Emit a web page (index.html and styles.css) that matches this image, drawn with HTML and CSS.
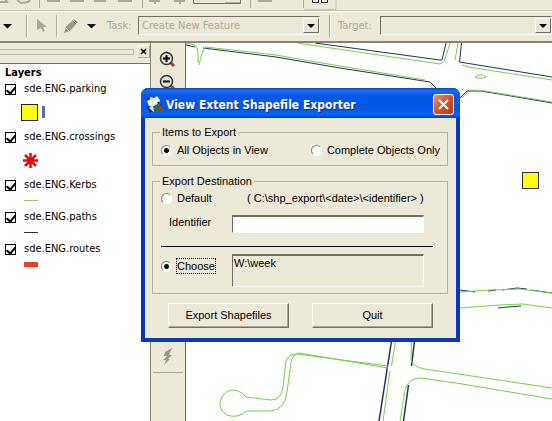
FILE: index.html
```html
<!DOCTYPE html>
<html lang="en">
<head>
<meta charset="utf-8">
<title>View Extent Shapefile Exporter</title>
<link rel="stylesheet" href="styles.css">
</head>
<body>
<header class="toolbars">
  <div class="bar-standard">
    <svg class="bar-icons" width="552" height="10" aria-hidden="true">
      <g fill="none" stroke="#aca899">
        <path d="M0 2h7l-2-3M17 0l4 3 7-1 2-2M47 1h13M70 1h14M94 1h12M118 1h14M149 1h11M155 0v4M174 1h11M180 0v4M258 1h14" stroke-width="2"/>
        <path d="M39.500 0v8M142.500 0v8M250.500 0v8M303.500 0v8"/>
      </g>
      <path d="M193.500 0v3.500H240.500V0" fill="none" stroke="#716f64"/>
      <path d="M225 3h15" stroke="#716f64"/>
      <path d="M312.500 0v2.500h6V0M321.500 0v2.500h6V0" fill="none" stroke="#222"/>
      <path d="M304 9.500h32V0" fill="none" stroke="#c5c2b2"/>
    </svg>
  </div>
  <div class="bar-editor">
    <button class="tool editor-menu" aria-label="Editor menu"><svg width="10" height="6"><path d="M0 1h9L4.500 5.500z" fill="#000"/></svg></button>
    <span class="rule"></span>
    <button class="tool pointer" aria-label="Edit tool"><svg width="12" height="14"><path d="M1 0l10 8H7l2 4-2 1-2-4-4 2z" fill="#aca899"/></svg></button>
    <span class="rule"></span>
    <button class="tool pencil" aria-label="Sketch tool"><svg width="16" height="16"><path d="M0 15l2-6L10 1l4 3-8 9z" fill="#9a9788"/><path d="M2 10l3 3M9 2l4 4" stroke="#ece9d8"/></svg></button>
    <button class="tool" aria-label="Sketch tools"><svg width="10" height="6"><path d="M0 1h9L4.500 5.500z" fill="#000"/></svg></button>
    <label class="task-label" for="task">Task:</label>
    <span class="combo task">
      <select id="task" disabled><option>Create New Feature</option></select>
      <svg class="arrow" width="16" height="15" aria-hidden="true"><path d="M3 5h8l-4 4z" fill="#000"/></svg>
    </span>
    <span class="rule"></span>
    <label class="target-label" for="target">Target:</label>
    <span class="combo target">
      <select id="target" disabled><option></option></select>
      <svg class="arrow" width="16" height="15" aria-hidden="true"><path d="M3 5h8l-4 4z" fill="#000"/></svg>
    </span>
  </div>
</header>
<main class="workspace">
  <aside class="contents">
    <div class="grip-row"><span class="grip"></span><button class="panel-close" aria-label="Close panel"><svg width="7" height="7"><path d="M1 1l5 5M6 1L1 6" stroke="#000" stroke-width="1.500"/></svg></button></div>
    <div class="layers">
      <h2>Layers</h2>
      <label class="layer"><input type="checkbox" checked>sde.ENG.parking</label>
      <div class="symbol tall"><svg width="30" height="20"><rect x=".5" y="1.500" width="16" height="16" fill="#ff0" stroke="#222"/><path d="M22.500 3v12" stroke="#5b6f99" stroke-width="3"/></svg></div>
      <label class="layer"><input type="checkbox" checked>sde.ENG.crossings</label>
      <div class="symbol tall"><svg width="20" height="20"><path d="M9.500 2v15M2 9.500h15M4 4l11 11M15 4L4 15" stroke="#e30b0b" stroke-width="2.500"/></svg></div>
      <label class="layer"><input type="checkbox" checked>sde.ENG.Kerbs</label>
      <div class="symbol"><svg width="20" height="10"><path d="M3 4.500h14" stroke="#8fd05f"/></svg></div>
      <label class="layer"><input type="checkbox" checked>sde.ENG.paths</label>
      <div class="symbol"><svg width="20" height="10"><path d="M3 4.500h14" stroke="#26324a"/></svg></div>
      <label class="layer"><input type="checkbox" checked>sde.ENG.routes</label>
      <div class="symbol"><svg width="20" height="10"><path d="M3 4.500h14" stroke="#e0402c" stroke-width="5"/></svg></div>
    </div>
  </aside>
  <nav class="tools">
    <button class="tool" aria-label="Zoom in"><svg width="18" height="18"><path d="M11 11l4 4" stroke="#b03a30" stroke-width="3"/><circle cx="7.500" cy="7.500" r="6" fill="#e4e4dc" stroke="#333" stroke-width="1.500"/><path d="M7.500 4v7M4 7.500h7" stroke="#000" stroke-width="2"/></svg></button>
    <button class="tool" aria-label="Zoom out"><svg width="18" height="18"><path d="M11 11l4 4" stroke="#b03a30" stroke-width="3"/><circle cx="7.500" cy="7.500" r="6" fill="#e4e4dc" stroke="#333" stroke-width="1.500"/><path d="M4 7.500h7" stroke="#000" stroke-width="2"/></svg></button>
    <button class="tool flash" aria-label="Hyperlink"><svg width="12" height="18"><path d="M10 0L3 4l-1 4h3l-4 4h3l-2 5 6-6H6l4-4H7z" fill="#9a9788"/></svg></button>
  </nav>
  <section class="map" aria-label="Map">
    <svg width="100%" height="100%">
      <g transform="translate(-186 -43)" fill="none">
        <g stroke="#23305c">
          <path d="M186 45l9 2M203 48L276 57 340 68 430 82 436 88M315 43L440 60 442 60 446 43M461.500 43L459.500 62 552 77M460 98l7-7h14l30 5 41 7"/>
          <path d="M460 290l15 2M488 291l8-1M502 290l15-2 10 1M531 290l21 3M498 308l10-1 13-1"/>
          <path d="M391.500 341L379 421M414.500 341L411.500 366M408.500 385L403.500 421" stroke-width="1.500"/>
        </g>
        <g stroke="#72cf4c">
          <path d="M186 43l9 2q4 3 3 18M206 47L276 55 310 61 425 80M206 47q-4 3-7 18M297 43L440 64q5-2 5-5l5-16M462 65l6 2 84 13M458 43l-3 17M462 98l8-8 15 1 67 11"/>
          <path d="M475 77l3-2h5l3 2-3 1h-5zM460 292l30-2 30-1 32 4M460 308l40-3 23-1 29 4"/>
          <path d="M395.500 341L391.500 366M390 371L383 421M411.500 341l-.5 19q2 7 14 9L552 388M400 421l5-31q3-12 16-12l35 5 96 16"/>
          <path d="M388 366L297 354q-9 0-11 7l-3 26q-2 13-12 13l-25-3-4-4q-11-7-19 2-8 13 4 20 10 4 20-4l23 0q15-1 17-19l4-30q2-8 8-9L388 368"/>
        </g>
        <rect x="522.500" y="172.500" width="16" height="16" fill="#ff0" stroke="#333"/>
      </g>
    </svg>
  </section>
</main>
<form class="dialog" role="dialog" aria-labelledby="dialog-title">
  <div class="titlebar">
    <svg width="18" height="18" aria-hidden="true"><path d="M1 5l3-4 4 1 3-2 3 4-2 6H3z" fill="#e9f1e7"/><path d="M1 4l3-2M2 11l3 5M12 6l4 7" stroke="#222" stroke-width="2"/><path d="M9 9l5-2 1 9H7z" fill="#356b4c"/><path d="M3 12l4-3 1 7" fill="#d5ebff"/><path d="M14 10l3 5" stroke="#c33" stroke-width="2"/></svg>
    <h1 id="dialog-title">View Extent Shapefile Exporter</h1>
    <button type="button" class="close" aria-label="Close"><svg width="13" height="13"><path d="M2 2l9 9M11 2l-9 9" stroke="#fff" stroke-width="2"/></svg></button>
  </div>
  <div class="dialog-body">
    <fieldset>
      <legend>Items to Export</legend>
      <div class="items">
        <label class="radio"><input type="radio" name="items" checked><span>All Objects in View</span></label>
        <label class="radio"><input type="radio" name="items"><span>Complete Objects Only</span></label>
      </div>
    </fieldset>
    <fieldset>
      <legend>Export Destination</legend>
      <div class="destination">
        <div class="row default-row">
          <label class="radio"><input type="radio" name="dest"><span>Default</span></label>
          <span class="hint">( C:\shp_export\&lt;date&gt;\&lt;identifier&gt; )</span>
        </div>
        <div class="row">
          <label class="id-label" for="identifier">Identifier</label>
          <input class="field" id="identifier" type="text">
        </div>
        <hr>
        <div class="row choose-row">
          <label class="radio"><input type="radio" name="dest" checked><span class="focused">Choose</span></label>
          <textarea class="field path" aria-label="Export folder" readonly>W:\week</textarea>
        </div>
      </div>
    </fieldset>
    <div class="actions">
      <button type="button">Export Shapefiles</button>
      <button type="button">Quit</button>
    </div>
  </div>
</form>
</body>
</html>
```
FILE: styles.css
```css
* { box-sizing: border-box; }

body {
  margin: 0;
  height: 100vh;
  display: flex;
  flex-direction: column;
  overflow: hidden;
  background: #ece9d8;
  color: #000;
  font: 11px/14px "Liberation Sans", Arial, sans-serif;
}

button, input, select, textarea { font: inherit; color: inherit; margin: 0; }
svg { display: block; flex: none; }

.tool {
  display: flex;
  padding: 0;
  border: 0;
  background: none;
}

.toolbars { border-bottom: 2px solid #858375; }
.bar-standard {
  height: 11px;
  overflow: hidden;
  border-bottom: 1px solid #c5c2b2;
}
.bar-editor {
  display: flex;
  align-items: center;
  height: 30px;
  padding: 0 0 2px 3px;
  border-top: 1px solid #fff;
  color: #aca899;
  font-family: "DejaVu Sans Condensed", Tahoma, sans-serif;
}
.rule {
  width: 2px;
  height: 22px;
  border-left: 1px solid #aca899;
  border-right: 1px solid #fff;
}
.editor-menu { margin-right: 13px; }
.pointer { margin: 0 8px; }
.pencil { margin: 0 7px 0 6px; }
.task-label { margin: 0 5px 0 10px; width: 26px; }
.target-label { margin: 0 4px 0 7px; width: 38px; }
.combo {
  display: flex;
  align-items: center;
  height: 19px;
  border: 1px solid;
  border-color: #716f64 #fff #fff #716f64;
}
.combo select {
  flex: 1;
  min-width: 0;
  padding: 0 3px;
  border: 0;
  background: none;
  appearance: none;
  opacity: 1;
}
.task { width: 182px; margin-right: 9px; }
.target { flex: 1; }
.arrow {
  border: 1px solid;
  border-color: #fff #716f64 #716f64 #fff;
}

.workspace { flex: 1; display: flex; min-height: 0; }

.contents {
  width: 151px;
  display: flex;
  flex-direction: column;
  border-right: 1px solid #858375;
}
.grip-row {
  display: flex;
  align-items: center;
  height: 20px;
  padding-bottom: 3px;
}
.grip {
  flex: 1;
  height: 6px;
  margin-right: 3px;
  border: 1px solid #bdb9a7;
  border-width: 1px 1px 1px 0;
}
.panel-close {
  display: grid;
  place-items: center;
  width: 13px;
  height: 13px;
  padding: 0;
  border: 1px solid;
  border-color: #fff #aca899 #aca899 #fff;
  background: none;
}
.layers {
  flex: 1;
  padding: 2px 5px;
  border-top: 1px solid #716f64;
  background: #fff;
  font-family: "DejaVu Sans Condensed", Tahoma, sans-serif;
}
.layers h2 { margin: 0; font-size: 11px; line-height: 14px; }
.layer { display: flex; align-items: center; height: 18px; }
.layer input {
  display: grid;
  justify-content: center;
  align-content: start;
  width: 11px;
  height: 11px;
  margin: 0 8px 0 0;
  appearance: none;
  border: 1px solid #000;
}
.layer input:checked::before {
  content: "";
  width: 4px;
  height: 7px;
  border: solid #000;
  border-width: 0 2px 2px 0;
  transform: rotate(40deg);
}
.symbol { display: flex; align-items: center; height: 14px; padding-left: 16px; }
.symbol.tall { height: 30px; }

.tools {
  width: 35px;
  display: flex;
  flex-direction: column;
  align-items: center;
  gap: 5px;
  padding-top: 8px;
  border-right: 1px solid #716f64;
}
.tools .flash {
  width: 30px;
  justify-content: center;
  margin-top: auto;
  margin-bottom: 48px;
  padding-bottom: 6px;
  border-bottom: 1px solid #aca899;
}
.map { flex: 1; min-width: 0; background: #fff; }

.dialog {
  position: absolute;
  left: 141px;
  top: 88px;
  width: 319px;
  border: solid #0a36c0;
  border-width: 0 4px 4px;
  border-radius: 7px 7px 0 0;
  background: #ece9d8;
}
.titlebar {
  display: flex;
  align-items: center;
  height: 30px;
  margin: 0 -4px;
  padding: 3px 6px 0 5px;
  border-radius: 7px 7px 0 0;
  background: linear-gradient(#0a48c4, #1f6cf0 10%, #0557e5 25%, #0557e8 70%, #0764fb 88%, #0341c0);
}
.titlebar h1 {
  flex: 1;
  margin: 0 0 0 2px;
  color: #fff;
  font: bold 12px/18px "DejaVu Sans Condensed", "Trebuchet MS", sans-serif;
  text-shadow: 1px 1px #0a2f8c;
}
.close {
  display: grid;
  place-items: center;
  width: 21px;
  height: 21px;
  padding: 0;
  border: 1px solid #fff;
  border-radius: 3px;
  background: linear-gradient(135deg, #ee9277, #d8502f 50%, #b93418);
}

.dialog-body { padding: 7px 8px 10px 7px; }
fieldset {
  min-width: 0;
  margin: 0 0 8px;
  padding: 0 7px 4px 8px;
  border: 1px solid #b5b19f;
}
legend { padding: 0 2px; margin-left: -1px; }
.items { display: flex; justify-content: space-between; height: 22px; }
.radio { display: flex; align-items: center; gap: 5px; white-space: nowrap; }
.radio input {
  width: 11px;
  height: 11px;
  appearance: none;
  border: 1px solid;
  border-color: #858375 #fff #fff #858375;
  border-radius: 50%;
  background: #fff;
}
.radio input:checked { background: radial-gradient(circle, #000 2px, #fff 3px); }

.destination { display: flex; flex-direction: column; }
.row { display: flex; align-items: center; padding-right: 16px; }
.default-row { height: 20px; margin-bottom: 7px; }
.default-row .radio { width: 86px; }
.hint { white-space: nowrap; }
.id-label { width: 63px; margin-left: 8px; padding-bottom: 4px; }
.field {
  flex: 1;
  min-width: 0;
  height: 18px;
  padding: 0 1px;
  border: 1px solid;
  border-color: #716f64 #fff #fff #716f64;
  border-top-width: 2px;
  border-radius: 0;
  background: #fff;
}
hr {
  width: 272px;
  max-width: 100%;
  margin: 13px 0 7px;
  border: 0;
  border-top: 1px solid #000;
}
.choose-row { align-items: flex-start; margin-bottom: 2px; }
.choose-row .radio { width: 71px; height: 24px; }
.path { height: 33px; background: #ece9d8; resize: none; overflow: hidden; }
.focused { outline: 1px dotted #000; }

.actions {
  display: flex;
  justify-content: space-between;
  margin-top: 9px;
  padding: 0 15px 0 16px;
}
.actions button {
  width: 121px;
  height: 25px;
  padding: 0 0 2px;
  border: 1px solid;
  border-color: #fff #716f64 #716f64 #fff;
  background: #ece9d8;
  box-shadow: inset -1px -1px #aca899;
}
```
